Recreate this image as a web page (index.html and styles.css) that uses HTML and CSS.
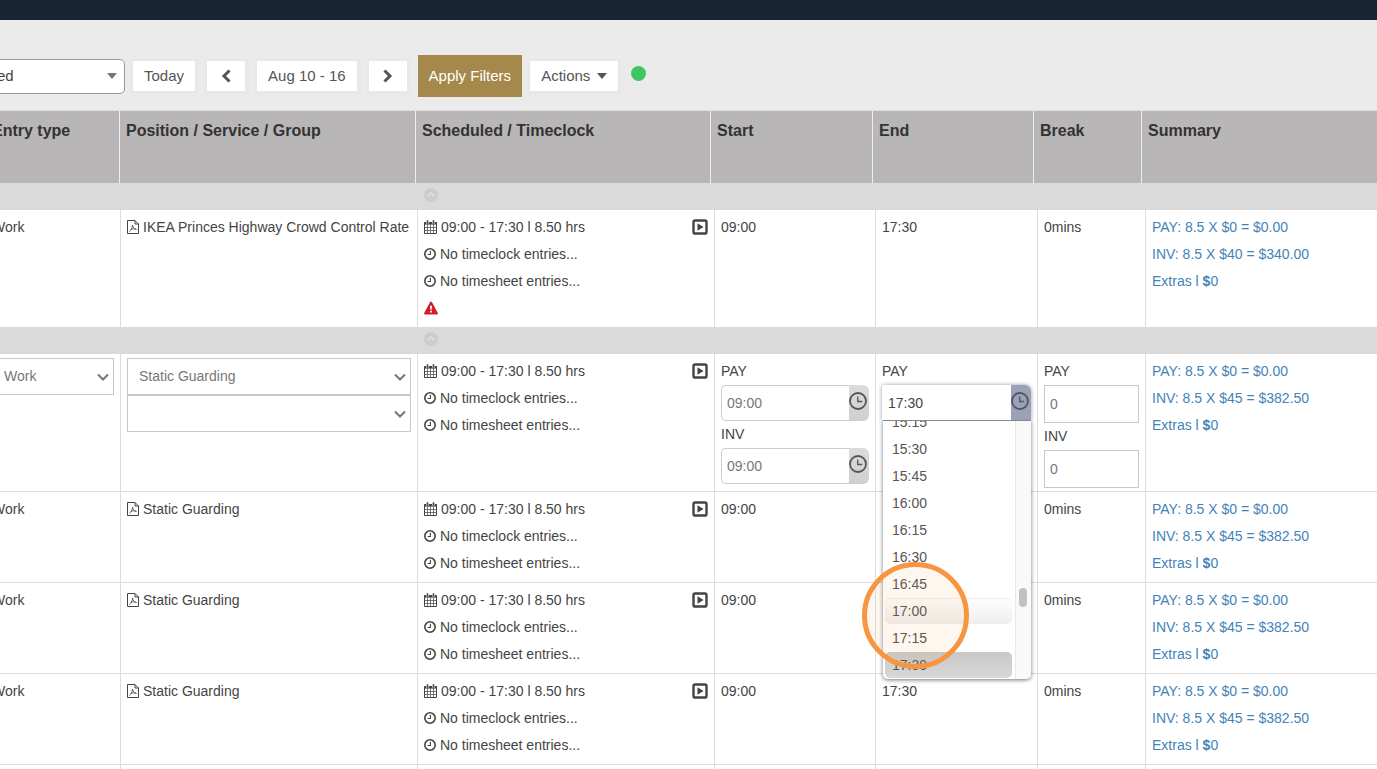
FILE: index.html
```
<!DOCTYPE html>
<html lang="en">
<head>
    <meta charset="UTF-8">
    <meta name="viewport" content="width=device-width, initial-scale=1.0">
    <title>Timesheets</title>
    <link rel="stylesheet" href="styles.css">
</head>
<body>
    <!-- Icons -->
    <svg class="sprite" aria-hidden="true">
        <symbol id="i-pdf" viewBox="0 0 12 14">
            <path d="M.5.5h7.500l3.500 3.500v9.500h-11zM8 .5v3.500h3.500" fill="none" stroke="currentColor"/>
            <path d="M2.300 11.500c1-.4 3.200-3.500 3.300-6.500M5.600 5c0 2.500 2 4.300 4 4.600M3.800 9.500c1.500-.7 3.500-1 5.500-.2" fill="none" stroke="currentColor" stroke-width=".8"/>
        </symbol>
        <symbol id="i-calendar" viewBox="0 0 13 14">
            <path d="M.5 2.500h12v11H.5z" fill="none" stroke="currentColor"/>
            <path d="M.5 2h12v2.600H.5z" fill="currentColor"/>
            <path d="M1 7.500h11M1 10.500h11M3.500 4.500v9M6.500 4.500v9M9.500 4.500v9" fill="none" stroke="currentColor" stroke-width=".7"/>
            <path d="M3.500.4v3.200M9.500.4v3.200" stroke="#fff" stroke-width="2.800"/>
            <path d="M3.500.2v3.300M9.500.2v3.300" stroke="currentColor" stroke-width="1.600"/>
        </symbol>
        <symbol id="i-clock" viewBox="0 0 12 12">
            <circle cx="6" cy="6" r="5.200" fill="none" stroke="currentColor" stroke-width="1.600"/>
            <path d="M6.400 2.800v3.700H3.600" fill="none" stroke="currentColor" stroke-width="1.100"/>
        </symbol>
        <symbol id="i-picker" viewBox="0 0 18 18">
            <circle cx="9" cy="9" r="8" fill="none" stroke="currentColor" stroke-width="1.800"/>
            <path d="M8.700 4.500v5h4.500" fill="none" stroke="currentColor" stroke-width="1.300"/>
        </symbol>
        <symbol id="i-play" viewBox="0 0 16 16">
            <rect x="1.500" y="1.500" width="13" height="13" rx="1.600" fill="none" stroke="currentColor" stroke-width="2.400"/>
            <path d="M5.500 4.300v7.400L11.600 8z" fill="currentColor"/>
        </symbol>
        <symbol id="i-warning" viewBox="0 0 14 14">
            <path d="M7 .5a1 1 0 0 1 .9.500l5.900 11a1 1 0 0 1-.9 1.500H1.100A1 1 0 0 1 .2 12L6.100 1A1 1 0 0 1 7 .5z" fill="currentColor"/>
            <path d="M6 4.800h2l-.3 4H6.300zM6.100 9.700h1.800v1.700H6.100z" fill="#fff"/>
        </symbol>
        <symbol id="i-up" viewBox="0 0 14 14">
            <circle cx="7" cy="7" r="7" fill="#cdcbcc"/>
            <path d="M3.600 8.500 7 5.100l3.400 3.400" fill="none" stroke="#dedede" stroke-width="2"/>
        </symbol>
        <symbol id="i-left" viewBox="0 0 10 14">
            <path d="M8.500 1.500 3 7l5.500 5.500" fill="none" stroke="currentColor" stroke-width="3"/>
        </symbol>
        <symbol id="i-right" viewBox="0 0 10 14">
            <path d="M1.500 1.500 7 7l-5.500 5.500" fill="none" stroke="currentColor" stroke-width="3"/>
        </symbol>
        <symbol id="i-caret" viewBox="0 0 10 6">
            <path d="M0 0h10L5 6z" fill="currentColor"/>
        </symbol>
        <symbol id="i-chevron" viewBox="0 0 12 8">
            <path d="M1 1.500l5 5 5-5" fill="none" stroke="currentColor" stroke-width="2"/>
        </symbol>
    </svg>

    <header class="topbar"></header>

    <main>
        <div class="toolbar">
            <div class="select-box status">
                <select aria-label="Status"><option>ed</option></select>
                <svg class="arrow" width="10" height="6"><use href="#i-caret"/></svg>
            </div>
            <div class="date-nav">
                <button type="button" class="btn">Today</button>
                <button type="button" class="btn btn-icon" aria-label="Previous"><svg width="10" height="14"><use href="#i-left"/></svg></button>
                <button type="button" class="btn">Aug 10 - 16</button>
                <button type="button" class="btn btn-icon" aria-label="Next"><svg width="10" height="14"><use href="#i-right"/></svg></button>
            </div>
            <button type="button" class="btn btn-primary">Apply Filters</button>
            <button type="button" class="btn">Actions <svg width="10" height="6"><use href="#i-caret"/></svg></button>
            <span class="online"></span>
        </div>

        <table class="head">
            <colgroup>
                <col class="h-type"><col class="h-position"><col class="h-scheduled"><col class="h-start"><col class="h-end"><col class="h-break"><col>
            </colgroup>
            <thead>
                <tr>
                    <th>Entry type</th>
                    <th>Position / Service / Group</th>
                    <th>Scheduled / Timeclock</th>
                    <th>Start</th>
                    <th>End</th>
                    <th>Break</th>
                    <th>Summary</th>
                </tr>
            </thead>
        </table>

        <table class="entries">
            <colgroup>
                <col class="c-type"><col class="c-position"><col class="c-scheduled"><col class="c-start"><col class="c-end"><col class="c-break"><col>
            </colgroup>
            <tbody>
                <tr class="band">
                    <td colspan="2"></td>
                    <td colspan="5"><svg width="14" height="14"><use href="#i-up"/></svg></td>
                </tr>
                <tr class="last">
                    <td>Work</td>
                    <td><div class="line"><svg width="12" height="14"><use href="#i-pdf"/></svg>IKEA Princes Highway Crowd Control Rate</div></td>
                    <td>
                        <div class="line"><svg width="13" height="14"><use href="#i-calendar"/></svg>09:00 - 17:30 l 8.50 hrs<svg class="play" width="16" height="16"><use href="#i-play"/></svg></div>
                        <div class="line"><svg width="12" height="12"><use href="#i-clock"/></svg>No timeclock entries...</div>
                        <div class="line"><svg width="12" height="12"><use href="#i-clock"/></svg>No timesheet entries...</div>
                        <div class="line warning"><svg width="14" height="14"><use href="#i-warning"/></svg></div>
                    </td>
                    <td>09:00</td>
                    <td>17:30</td>
                    <td>0mins</td>
                    <td>
                        <a href="#">PAY: 8.5 X $0 = $0.00</a>
                        <a href="#">INV: 8.5 X $40 = $340.00</a>
                        <a href="#">Extras l <b>$</b>0</a>
                    </td>
                </tr>
                <tr class="band">
                    <td colspan="2"></td>
                    <td colspan="5"><svg width="14" height="14"><use href="#i-up"/></svg></td>
                </tr>
                <tr>
                    <td>
                        <div class="select-box">
                            <select aria-label="Entry type"><option>Work</option></select>
                            <svg class="arrow" width="12" height="8"><use href="#i-chevron"/></svg>
                        </div>
                    </td>
                    <td>
                        <div class="select-box">
                            <select aria-label="Position"><option>Static Guarding</option></select>
                            <svg class="arrow" width="12" height="8"><use href="#i-chevron"/></svg>
                        </div>
                        <div class="select-box">
                            <select aria-label="Service"><option></option></select>
                            <svg class="arrow" width="12" height="8"><use href="#i-chevron"/></svg>
                        </div>
                    </td>
                    <td>
                        <div class="line"><svg width="13" height="14"><use href="#i-calendar"/></svg>09:00 - 17:30 l 8.50 hrs<svg class="play" width="16" height="16"><use href="#i-play"/></svg></div>
                        <div class="line"><svg width="12" height="12"><use href="#i-clock"/></svg>No timeclock entries...</div>
                        <div class="line"><svg width="12" height="12"><use href="#i-clock"/></svg>No timesheet entries...</div>
                    </td>
                    <td>
                        <label for="start-pay">PAY</label>
                        <div class="time">
                            <input type="text" id="start-pay" value="09:00">
                            <button type="button" aria-label="Pick start time"><svg width="18" height="18"><use href="#i-picker"/></svg></button>
                        </div>
                        <label for="start-inv">INV</label>
                        <div class="time">
                            <input type="text" id="start-inv" value="09:00">
                            <button type="button" aria-label="Pick invoice start time"><svg width="18" height="18"><use href="#i-picker"/></svg></button>
                        </div>
                    </td>
                    <td>
                        <label for="end-pay">PAY</label>
                        <div class="time open">
                            <input type="text" id="end-pay" value="17:30">
                            <button type="button" aria-label="Pick end time"><svg width="18" height="18"><use href="#i-picker"/></svg></button>
                            <div class="menu">
                                <ul>
                                    <li>15:15</li>
                                    <li>15:30</li>
                                    <li>15:45</li>
                                    <li>16:00</li>
                                    <li>16:15</li>
                                    <li>16:30</li>
                                    <li>16:45</li>
                                    <li class="hover">17:00</li>
                                    <li>17:15</li>
                                    <li class="selected">17:30</li>
                                </ul>
                                <div class="track"><span class="thumb"></span></div>
                            </div>
                            <span class="click-ring"></span>
                        </div>
                    </td>
                    <td>
                        <label for="break-pay">PAY</label>
                        <input type="text" class="break" id="break-pay" value="0">
                        <label for="break-inv">INV</label>
                        <input type="text" class="break" id="break-inv" value="0">
                    </td>
                    <td>
                        <a href="#">PAY: 8.5 X $0 = $0.00</a>
                        <a href="#">INV: 8.5 X $45 = $382.50</a>
                        <a href="#">Extras l <b>$</b>0</a>
                    </td>
                </tr>
                <tr>
                    <td>Work</td>
                    <td><div class="line"><svg width="12" height="14"><use href="#i-pdf"/></svg>Static Guarding</div></td>
                    <td>
                        <div class="line"><svg width="13" height="14"><use href="#i-calendar"/></svg>09:00 - 17:30 l 8.50 hrs<svg class="play" width="16" height="16"><use href="#i-play"/></svg></div>
                        <div class="line"><svg width="12" height="12"><use href="#i-clock"/></svg>No timeclock entries...</div>
                        <div class="line"><svg width="12" height="12"><use href="#i-clock"/></svg>No timesheet entries...</div>
                    </td>
                    <td>09:00</td>
                    <td></td>
                    <td>0mins</td>
                    <td>
                        <a href="#">PAY: 8.5 X $0 = $0.00</a>
                        <a href="#">INV: 8.5 X $45 = $382.50</a>
                        <a href="#">Extras l <b>$</b>0</a>
                    </td>
                </tr>
                <tr>
                    <td>Work</td>
                    <td><div class="line"><svg width="12" height="14"><use href="#i-pdf"/></svg>Static Guarding</div></td>
                    <td>
                        <div class="line"><svg width="13" height="14"><use href="#i-calendar"/></svg>09:00 - 17:30 l 8.50 hrs<svg class="play" width="16" height="16"><use href="#i-play"/></svg></div>
                        <div class="line"><svg width="12" height="12"><use href="#i-clock"/></svg>No timeclock entries...</div>
                        <div class="line"><svg width="12" height="12"><use href="#i-clock"/></svg>No timesheet entries...</div>
                    </td>
                    <td>09:00</td>
                    <td></td>
                    <td>0mins</td>
                    <td>
                        <a href="#">PAY: 8.5 X $0 = $0.00</a>
                        <a href="#">INV: 8.5 X $45 = $382.50</a>
                        <a href="#">Extras l <b>$</b>0</a>
                    </td>
                </tr>
                <tr>
                    <td>Work</td>
                    <td><div class="line"><svg width="12" height="14"><use href="#i-pdf"/></svg>Static Guarding</div></td>
                    <td>
                        <div class="line"><svg width="13" height="14"><use href="#i-calendar"/></svg>09:00 - 17:30 l 8.50 hrs<svg class="play" width="16" height="16"><use href="#i-play"/></svg></div>
                        <div class="line"><svg width="12" height="12"><use href="#i-clock"/></svg>No timeclock entries...</div>
                        <div class="line"><svg width="12" height="12"><use href="#i-clock"/></svg>No timesheet entries...</div>
                    </td>
                    <td>09:00</td>
                    <td>17:30</td>
                    <td>0mins</td>
                    <td>
                        <a href="#">PAY: 8.5 X $0 = $0.00</a>
                        <a href="#">INV: 8.5 X $45 = $382.50</a>
                        <a href="#">Extras l <b>$</b>0</a>
                    </td>
                </tr>
                <tr>
                    <td></td><td></td><td></td><td></td><td></td><td></td><td></td>
                </tr>
            </tbody>
        </table>
    </main>
</body>
</html>
```
FILE: styles.css
```
* {
    box-sizing: border-box;
}
body {
    font-family: "Liberation Sans", Arial, sans-serif;
    font-size: 14px;
    line-height: 27px;
    color: #444;
    background: #ebebeb;
    margin: 0;
    height: 100vh;
    overflow: hidden;
}
input, select, button {
    font: inherit;
    color: inherit;
    margin: 0;
}
svg {
    flex: none;
    display: block;
}
.sprite {
    display: none;
}
.topbar {
    height: 20px;
    background: #172434;
}
/* the grid is scrolled slightly to the right */
main {
    margin-left: -14px;
}

/* Toolbar */
.toolbar {
    display: flex;
    align-items: center;
    gap: 8px;
    padding: 35px 0 13px;
    font-size: 15px;
    line-height: 20px;
    color: #555;
}
.date-nav {
    display: flex;
    gap: 12px;
    margin-right: 3px;
}
.btn {
    display: flex;
    align-items: center;
    justify-content: center;
    gap: 7px;
    height: 30px;
    padding: 0 11px;
    border: none;
    background: #fff;
    box-shadow: 1px 1px 2px 3px rgba(0, 0, 0, 0.015);
    cursor: pointer;
}
.btn-icon {
    width: 38px;
}
.btn-primary {
    height: 42px;
    background: #a5884b;
    color: #fff;
    box-shadow: none;
}
.online {
    width: 15px;
    height: 15px;
    margin: 0 0 5px 5px;
    border-radius: 50%;
    background: #3ec663;
}

/* Selects */
.select-box {
    display: grid;
    align-items: center;
}
.select-box select, .select-box .arrow {
    grid-area: 1 / 1;
}
.select-box select {
    appearance: none;
    width: 100%;
    height: 37px;
    padding: 0 11px;
    border: 1px solid #c8c8c8;
    border-radius: 0;
    background: #fff;
    color: #777;
}
.select-box .arrow {
    justify-self: end;
    margin-right: 5px;
    color: #777;
    pointer-events: none;
}
.status {
    width: 139px;
}
.status select {
    height: 35px;
    border-color: #999;
    border-radius: 5px;
    padding-left: 10px;
    color: #444;
}
.status .arrow {
    margin-right: 8px;
}

/* Tables */
table {
    width: 100%;
    table-layout: fixed;
    border-collapse: separate;
    border-spacing: 0;
}
.h-type { width: 134px; }
.h-position { width: 296px; }
.h-scheduled { width: 295px; }
.h-start { width: 162px; }
.h-end { width: 161px; }
.h-break { width: 108px; }
.c-type { width: 135px; }
.c-position { width: 297px; }
.c-scheduled { width: 297px; }
.c-start { width: 161px; }
.c-end { width: 162px; }
.c-break { width: 108px; }
th {
    height: 73px;
    padding: 8px 6px;
    font-size: 16px;
    line-height: 23px;
    text-align: left;
    vertical-align: top;
    color: #333;
    background: #b8b6b7;
    border-top: 1px solid #ddd;
    border-right: 1px solid #eee;
}
.entries tr {
    height: 91px;
}
.entries .last {
    height: 117px;
}
.entries .band {
    height: 27px;
}
td {
    padding: 4px 6px 3px;
    vertical-align: top;
    white-space: nowrap;
    background: #fff;
    border-right: 1px solid #ddd;
    border-bottom: 1px solid #ddd;
}
th:last-child, td:last-child {
    border-right: none;
}
.last td {
    border-bottom: none;
}
.band td {
    padding: 5px 6px;
    background: #dadada;
    border: none;
}
.line {
    display: flex;
    align-items: center;
    gap: 4px;
    height: 27px;
}
.line svg {
    margin-bottom: 2px;
}
.line .play {
    margin-left: auto;
}
.warning {
    color: #d51c29;
}
td a {
    display: block;
    color: #4383b9;
    text-decoration: none;
}
td label {
    display: block;
}

/* Inputs */
.time {
    position: relative;
    display: flex;
    height: 36px;
}
.time input {
    flex: 1;
    min-width: 0;
    padding: 0 5px;
    border: 1px solid #ccc;
    border-right: none;
    border-radius: 5px 0 0 5px;
    background: #fff;
    color: #777;
    outline: none;
}
.time button {
    width: 20px;
    padding: 0 1px 4px 0;
    border: none;
    border-radius: 0 6px 6px 0;
    background: linear-gradient(#dcdcdc, #cfcfcf);
    color: #555;
}
.break {
    display: block;
    width: 100%;
    height: 38px;
    padding: 0 5px;
    border: 1px solid #c8c8c8;
    background: #fff;
    color: #777;
}
.open {
    border-radius: 3px 6px 0 0;
    box-shadow: 0 0 4px rgba(0, 0, 0, 0.4);
}
.open input {
    border-color: #fff;
    border-bottom-color: #888;
    border-radius: 3px 0 0 0;
    color: #444;
}
.open button {
    border-radius: 0 6px 0 0;
    background: #99a2b6;
    border-bottom: 1px solid #888;
    color: #556;
}

/* Time drop-down */
.menu {
    position: absolute;
    top: 36px;
    left: 1px;
    right: 0;
    height: 258px;
    display: flex;
    background: #fff;
    border-radius: 0 0 5px 5px;
    box-shadow: 0 1px 4px rgba(0, 0, 0, 0.55);
    clip-path: inset(0 -6px -6px -6px);
    overflow: hidden;
}
.menu ul {
    flex: 1;
    display: flex;
    flex-direction: column;
    justify-content: flex-end;
    gap: 1px;
    margin: 0;
    padding: 0 3px 1px 2px;
    list-style: none;
}
.menu li {
    flex: none;
    height: 26px;
    line-height: 26px;
    padding-left: 7px;
    border-radius: 5px;
    color: #555;
}
.menu .hover {
    background: linear-gradient(#fff, #eee);
    box-shadow: inset 0 1px #eee;
}
.menu .selected {
    background: linear-gradient(#c8c8c8, #d8d8d8);
}
.track {
    width: 16px;
    padding: 167px 3px 0;
    background: #f9f9f9;
    border-left: 1px solid #e8e8e8;
}
.thumb {
    display: block;
    width: 8px;
    height: 19px;
    border-radius: 4px;
    background: #c1c1c1;
}
.click-ring {
    position: absolute;
    top: 177px;
    left: -20px;
    width: 107px;
    height: 107px;
    border: 5px solid #f79540;
    border-radius: 50%;
    background: rgba(247, 149, 64, 0.08);
    pointer-events: none;
}
```
